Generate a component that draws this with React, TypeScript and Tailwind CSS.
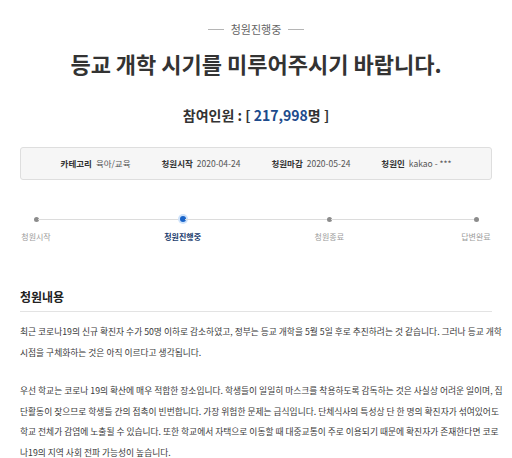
import React from 'react';

const FONT = { fontFamily: '"Noto Sans CJK KR", "Noto Sans", sans-serif' };

const steps = [
    { label: '청원시작', active: false },
    { label: '청원진행중', active: true },
    { label: '청원종료', active: false },
    { label: '답변완료', active: false },
];

const meta = [
    { name: '카테고리', value: '육아/교육' },
    { name: '청원시작', value: '2020-04-24' },
    { name: '청원마감', value: '2020-05-24' },
    { name: '청원인', value: 'kakao - ***' },
];

const Dot: React.FC<{ active: boolean }> = ({ active }) =>
    active ? (
        <div className="w-[10px] h-[10px] rounded-full bg-[#cfe3fb] flex items-center justify-center shrink-0">
            <div className="w-[6px] h-[6px] rounded-full bg-[#1a64c8]"></div>
        </div>
    ) : (
        <div className="w-[5px] h-[5px] rounded-full bg-[#8c8c8c] shrink-0"></div>
    );

const App: React.FC = () => {
    return (
        <div className="w-[512px] h-[458px] bg-white overflow-hidden px-5 text-[#333]" style={FONT}>
            <div className="pt-[21px] flex items-center justify-center gap-[7px] text-[11px] leading-[16px] text-[#666]">
                <span className="w-4 h-px bg-[#b5b5b5]"></span>
                <span>청원진행중</span>
                <span className="w-4 h-px bg-[#b5b5b5]"></span>
            </div>

            <h1 className="mt-3 text-center text-[22px] leading-[28px] font-bold text-[#333]">
                등교 개학 시기를 미루어주시기 바랍니다.
            </h1>

            <div className="mt-[28px] text-center text-[14px] leading-[20px] font-bold text-[#333]">
                참여인원 : [ <span className="text-[#1d4b8c]">217,998</span>명 ]
            </div>

            <div className="mt-[22px] h-[33px] border border-[#dedede] bg-[#f6f6f6] rounded-[3px] flex items-center justify-center gap-[31px] text-[8.5px]">
                {meta.map((m) => (
                    <div key={m.name} className="flex items-center gap-[4px] whitespace-nowrap">
                        <span className="font-bold text-[#333]">{m.name}</span>
                        <span className="text-[#555]">{m.value}</span>
                    </div>
                ))}
            </div>

            <div className="mt-[34px] px-[14px] flex items-center h-[10px]">
                {steps.map((s, i) => (
                    <React.Fragment key={s.label}>
                        <div className="w-[4px] flex justify-center">
                            <Dot active={s.active} />
                        </div>
                        {i < steps.length - 1 && <div className="flex-1 h-px bg-[#dcdcdc]"></div>}
                    </React.Fragment>
                ))}
            </div>
            <div className="mt-[7px] flex justify-between text-[8px] leading-[12px]">
                {steps.map((s) => (
                    <div
                        key={s.label}
                        className={
                            s.active
                                ? 'w-[32px] text-center whitespace-nowrap flex justify-center font-bold text-[#23406e]'
                                : 'w-[32px] text-center whitespace-nowrap flex justify-center text-[#9a9a9a]'
                        }
                    >
                        {s.label}
                    </div>
                ))}
            </div>

            <h2 className="mt-[46px] text-[12px] leading-[16px] font-bold text-[#222] pb-[6px] border-b border-[#e3e3e3]">
                청원내용
            </h2>

            <div className="mt-[10px] text-[8.75px] leading-[20.5px] text-[#3a3a3a] whitespace-nowrap">
                <p>
                    최근 코로나19의 신규 확진자 수가 50명 이하로 감소하였고, 정부는 등교 개학을 5월 5일 후로 추진하려는 것 같습니다. 그러나 등교 개학
                    <br />
                    시점을 구체화하는 것은 아직 이르다고 생각됩니다.
                </p>
                <p className="mt-[18px]">
                    우선 학교는 코로나 19의 확산에 매우 적합한 장소입니다. 학생들이 일일히 마스크를 착용하도록 감독하는 것은 사실상 어려운 일이며, 집
                    <br />
                    단활동이 잦으므로 학생들 간의 접촉이 빈번합니다. 가장 위험한 문제는 급식입니다. 단체식사의 특성상 단 한 명의 확진자가 섞여있어도
                    <br />
                    학교 전체가 감염에 노출될 수 있습니다. 또한 학교에서 자택으로 이동할 때 대중교통이 주로 이용되기 때문에 확진자가 존재한다면 코로
                    <br />
                    나19의 지역 사회 전파 가능성이 높습니다.
                </p>
            </div>
        </div>
    );
};

export default App;
